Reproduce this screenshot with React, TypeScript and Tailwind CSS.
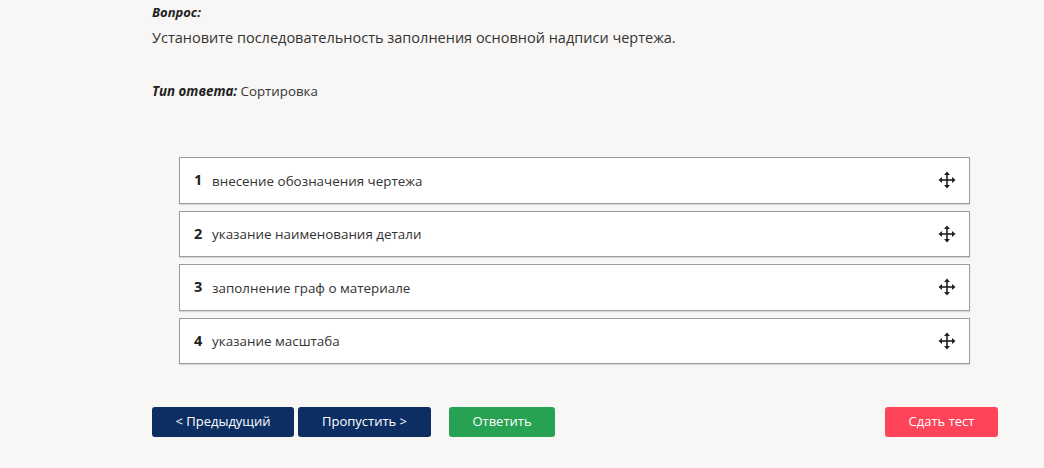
const items = [
  "внесение обозначения чертежа",
  "указание наименования детали",
  "заполнение граф о материале",
  "указание масштаба",
];

const MoveIcon = () => (
  <svg width="18" height="18" viewBox="0 0 18 18" fill="#222">
    <rect x="8.2" y="3" width="1.6" height="12" />
    <rect x="3" y="8.2" width="12" height="1.6" />
    <polygon points="9,0.5 12,4 6,4" />
    <polygon points="9,17.5 12,14 6,14" />
    <polygon points="0.5,9 4,6 4,12" />
    <polygon points="17.5,9 14,6 14,12" />
  </svg>
);

export default function App() {
  return (
    <div className="min-h-[468px] w-[1044px] bg-[#f8f7f5] text-[#222] font-['Open_Sans',sans-serif]">
      <div className="pl-[152px] pt-[3px]">
        <div className="text-[13px] font-bold italic leading-[18px]">Вопрос:</div>
        <div className="mt-[7px] text-[14.5px] leading-[20px] text-[#333]">
          Установите последовательность заполнения основной надписи чертежа.
        </div>
        <div className="mt-[34px] text-[13.3px] leading-[18px] text-[#333]">
          <span className="font-bold italic text-[#222]">Тип ответа:</span> Сортировка
        </div>
      </div>

      <div className="ml-[179px] mt-[57px] flex w-[791px] flex-col gap-[7px]">
        {items.map((t, i) => (
          <div
            key={i}
            className="flex h-[46.5px] items-center border border-[#9c9c9c] bg-white pl-[14px] pr-[13px] shadow-[0_1px_1px_rgba(0,0,0,0.12)]"
          >
            <span className="w-[18px] text-[14.5px] font-bold text-[#222]">{i + 1}</span>
            <span className="flex-1 text-[13.4px] text-[#333] pt-[1px]">{t}</span>
            <MoveIcon />
          </div>
        ))}
      </div>

      <div className="ml-[152px] mt-[43px] flex w-[846px] items-center text-[13px] text-white">
        <button className="h-[30px] w-[142px] rounded-[3px] bg-[#0c2e63]">&lt; Предыдущий</button>
        <button className="ml-[4px] h-[30px] w-[133px] rounded-[3px] bg-[#0c2e63]">Пропустить &gt;</button>
        <button className="ml-[18px] h-[30px] w-[106px] rounded-[3px] bg-[#27a152]">Ответить</button>
        <div className="flex-1" />
        <button className="h-[30px] w-[113px] rounded-[3px] bg-[#fd4459]">Сдать тест</button>
      </div>
    </div>
  );
}
